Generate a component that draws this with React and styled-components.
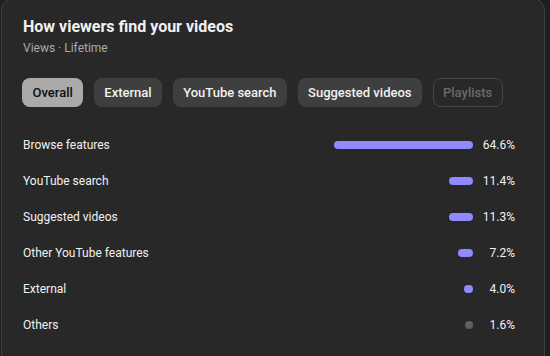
import React from "react";
import styled, { createGlobalStyle } from "styled-components";

const Global = createGlobalStyle`
  html, body { margin: 0; padding: 0; background: #1f1f1f; overflow: hidden; }
  body { font-family: Roboto, "Liberation Sans", Arial, sans-serif; }
`;

const Page = styled.div`
  width: 550px;
  height: 356px;
  padding-left: 1px;
  box-sizing: border-box;
  overflow: hidden;
`;

const Card = styled.section`
  width: 544px;
  margin-top: -2px;
  height: 380px;
  box-sizing: border-box;
  background: #282828;
  border: 1px solid #3e3e3e;
  border-radius: 12px;
  padding: 16px 29px 0 21px;
  color: #f1f1f1;
`;

const Title = styled.h2`
  margin: 0;
  font-size: 16px;
  line-height: 24px;
  font-weight: 700;
  color: #f1f1f1;
`;

const Subtitle = styled.div`
  font-size: 12px;
  line-height: 18px;
  color: #aaaaaa;
`;

const Chips = styled.div`
  display: flex;
  gap: 10.5px;
  margin-top: 21px;
  margin-left: -1px;
`;

const Chip = styled.button`
  height: 29px;
  box-sizing: border-box;
  padding: 0 9.5px;
  border-radius: 8px;
  font-family: inherit;
  font-size: 13px;
  font-weight: 500;
  border: 1px solid ${(p) => (p.$variant === "disabled" ? "#474747" : "transparent")};
  background: ${(p) =>
    p.$variant === "active" ? "#aaaaaa" : p.$variant === "disabled" ? "transparent" : "#3f3f3f"};
  color: ${(p) =>
    p.$variant === "active" ? "#0f0f0f" : p.$variant === "disabled" ? "#6a6a6a" : "#f1f1f1"};
  cursor: pointer;
`;

const List = styled.div`
  margin-top: 20px;
  display: flex;
  flex-direction: column;
`;

const Row = styled.div`
  height: 36px;
  display: grid;
  grid-template-columns: 1fr 215px 42px;
  align-items: center;
  font-size: 12px;
`;

const Label = styled.span`
  color: #f1f1f1;
`;

const Track = styled.div`
  display: flex;
  justify-content: flex-end;
`;

const Bar = styled.div`
  height: 8px;
  min-width: 8px;
  border-radius: 4px;
  background: ${(p) => (p.$muted ? "#606060" : "#8f8aff")};
`;

const Value = styled.span`
  text-align: right;
  color: #f1f1f1;
`;

const chips = [
  { label: "Overall", variant: "active" },
  { label: "External" },
  { label: "YouTube search" },
  { label: "Suggested videos" },
  { label: "Playlists", variant: "disabled" },
];

const rows = [
  { label: "Browse features", value: 64.6 },
  { label: "YouTube search", value: 11.4 },
  { label: "Suggested videos", value: 11.3 },
  { label: "Other YouTube features", value: 7.2 },
  { label: "External", value: 4.0 },
  { label: "Others", value: 1.6, muted: true },
];

export default function App() {
  return (
    <Page>
      <Global />
      <Card>
        <Title>How viewers find your videos</Title>
        <Subtitle>Views · Lifetime</Subtitle>
        <Chips>
          {chips.map((c) => (
            <Chip key={c.label} $variant={c.variant}>
              {c.label}
            </Chip>
          ))}
        </Chips>
        <List>
          {rows.map((r) => (
            <Row key={r.label}>
              <Label>{r.label}</Label>
              <Track>
                <Bar $muted={r.muted} style={{ width: `${(r.value / 100) * 215}px` }} />
              </Track>
              <Value>{r.value.toFixed(1)}%</Value>
            </Row>
          ))}
        </List>
      </Card>
    </Page>
  );
}
